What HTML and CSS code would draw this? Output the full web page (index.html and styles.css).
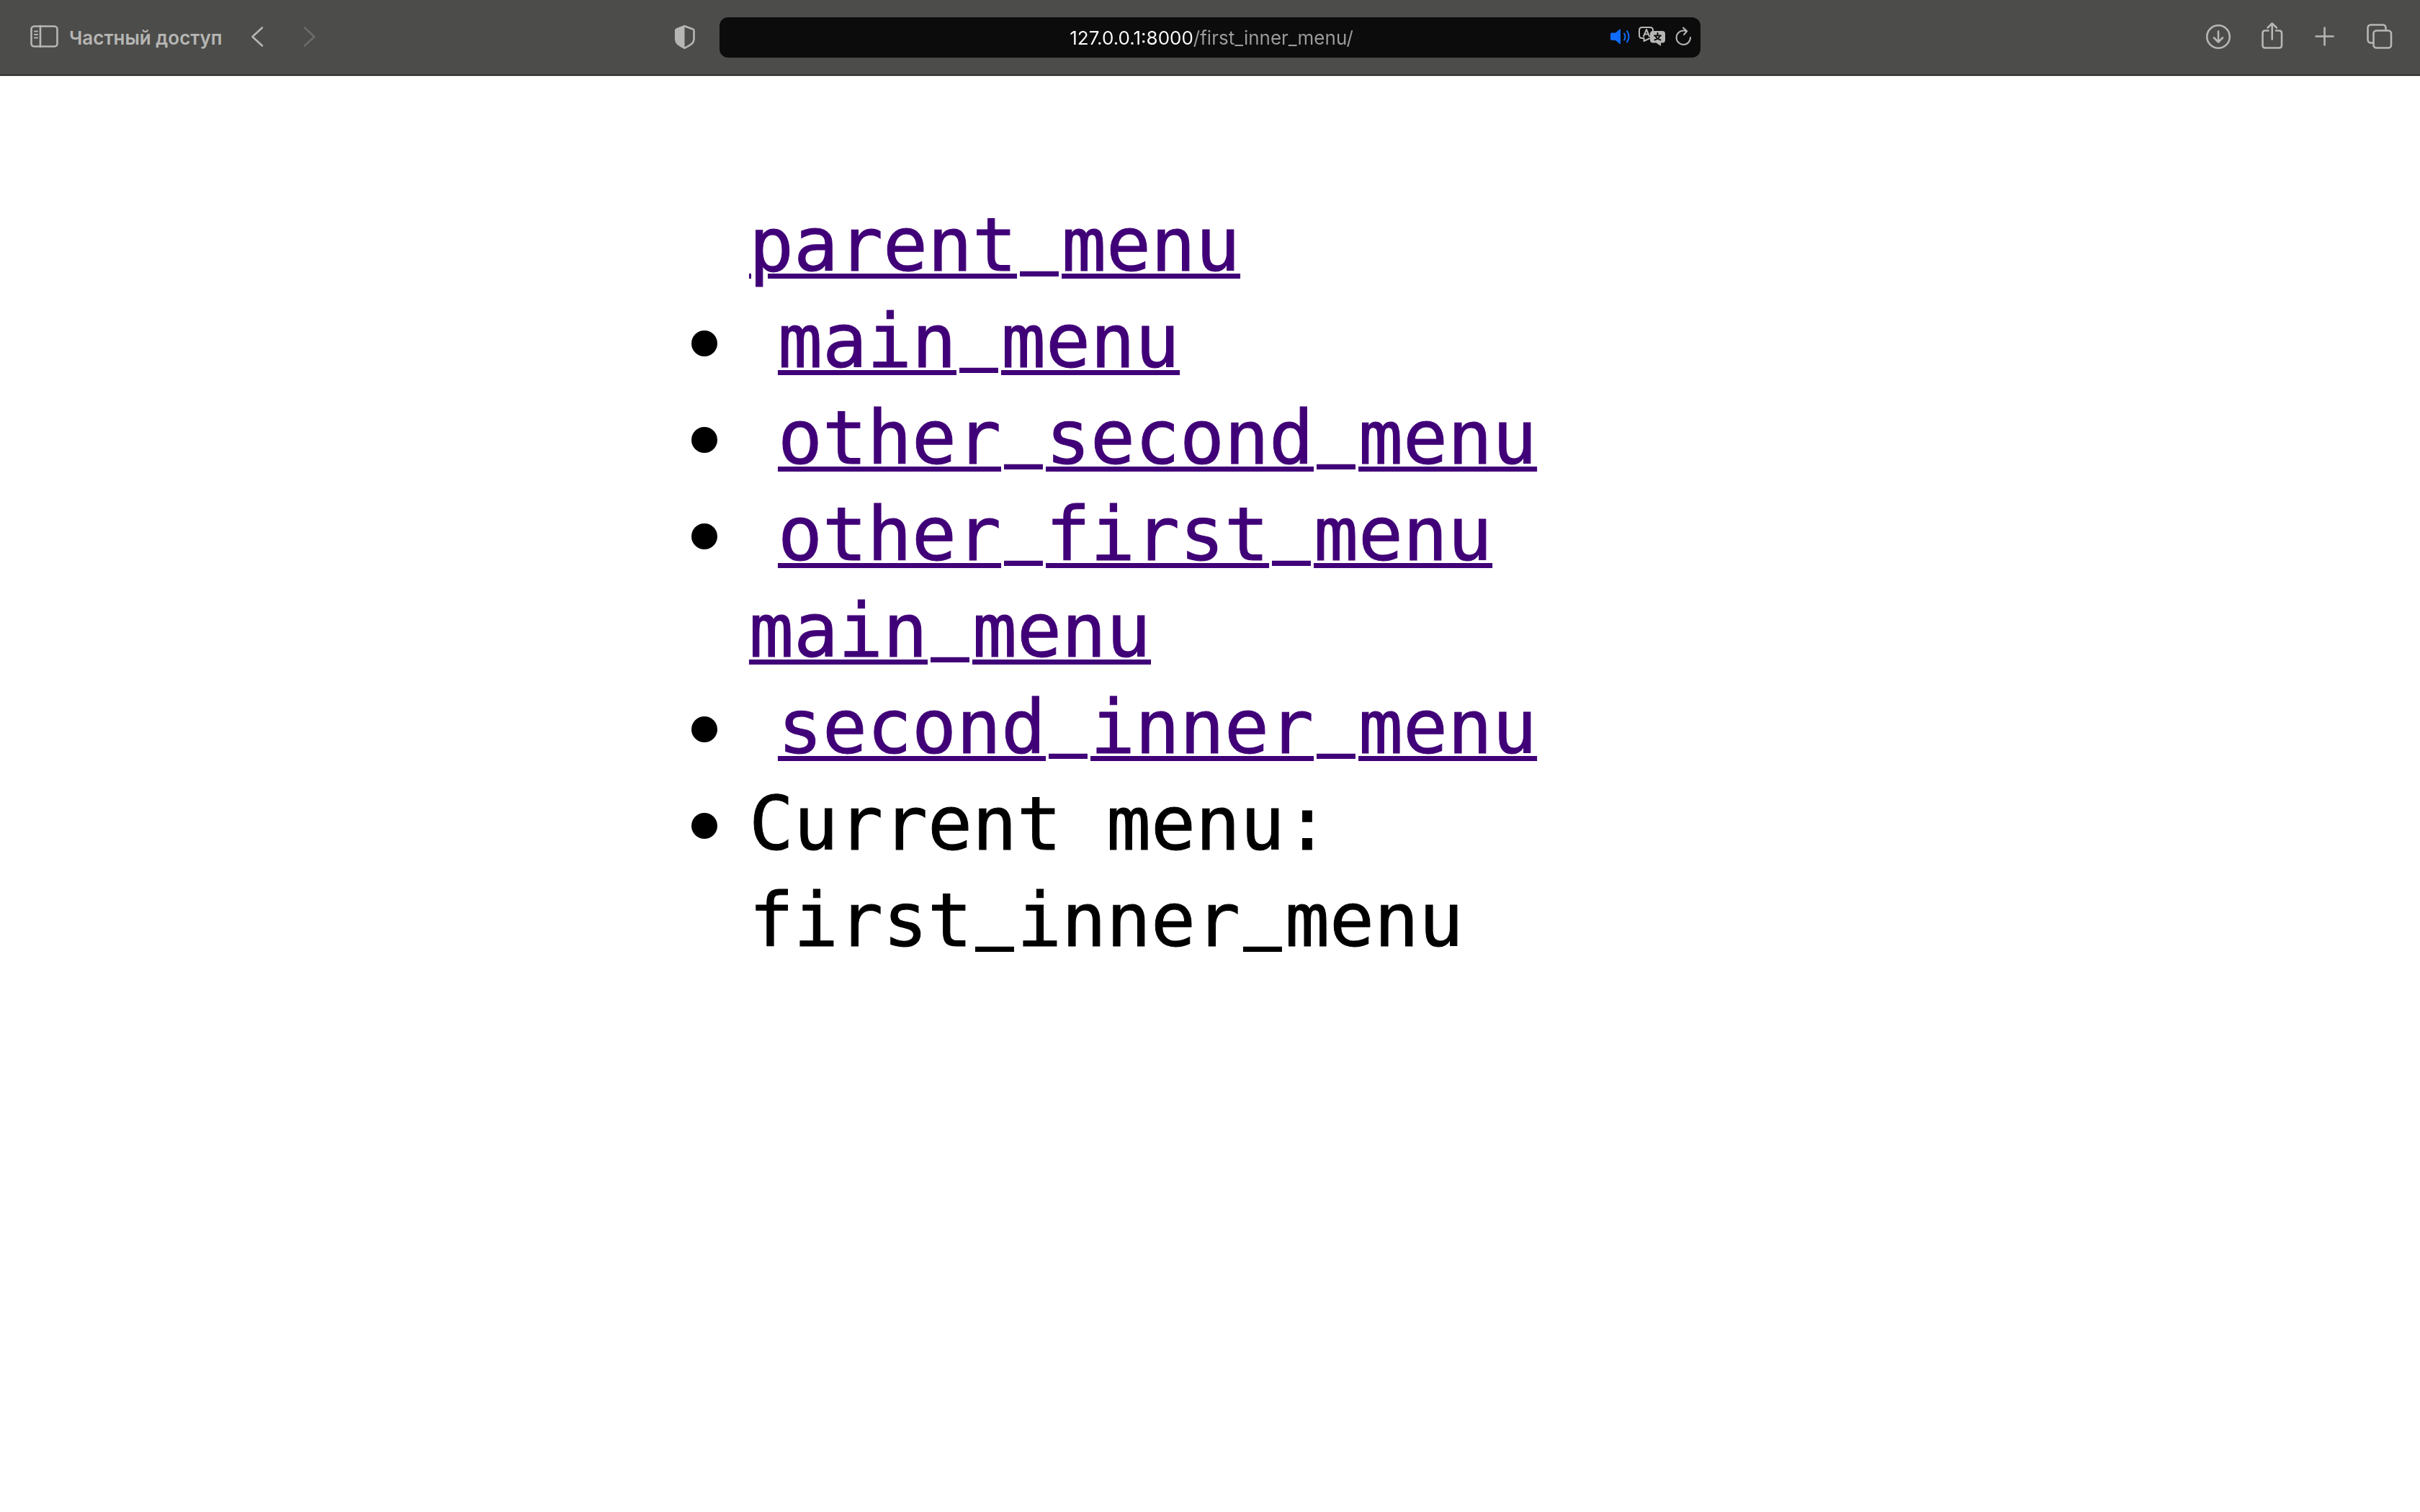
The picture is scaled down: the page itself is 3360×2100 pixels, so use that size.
FILE: index.html
```html
<!DOCTYPE html>
<html lang="ru">
<head>
<meta charset="utf-8">
<title>first_inner_menu</title>
<link rel="stylesheet" href="styles.css">
</head>
<body>
<header class="toolbar">
  <div class="tools tools-left">
    <button class="tool private" type="button">
      <svg width="42" height="44" viewBox="0 0 42 44" aria-hidden="true"><rect x="3.500" y="6.500" width="36" height="28" rx="4"/><path d="M16 6v29"/><path class="thin" d="M8 13.500h4M8 18h4M8 22.500h4"/></svg>
      <span>Частный доступ</span>
    </button>
    <button class="tool back" type="button" aria-label="Назад">
      <svg width="20" height="44" viewBox="0 0 20 44" aria-hidden="true"><path d="M17 8.500 3.500 21 17 33.500"/></svg>
    </button>
    <button class="tool forward" type="button" aria-label="Вперёд" disabled>
      <svg width="20" height="44" viewBox="0 0 20 44" aria-hidden="true"><path d="M4 8.500 17.500 21 4 33.500"/></svg>
    </button>
    <button class="tool shield" type="button" aria-label="Отчёт о конфиденциальности">
      <svg width="32" height="44" viewBox="0 0 32 44" aria-hidden="true"><path d="M15.500 6.200 27 10.500Q28.500 11 28.500 12.500V24Q28.500 28.500 24.500 31.500 20.500 34.500 15.500 36.700 10.500 34.500 6.800 31.500 3.200 28.500 3.200 24V12.500Q3.200 11 4.500 10.500Z"/><path class="solid" d="M15.500 6 4 10.500 3 12v13l3 5.500 9.500 6.500Z"/></svg>
    </button>
  </div>
  <div class="address">
    <input class="url" type="text" aria-label="Адрес" value="127.0.0.1:8000/first_inner_menu/">
    <div class="address-tools">
      <button class="tool sound" type="button" aria-label="Выключить звук">
        <svg width="28" height="44" viewBox="0 0 28 44" aria-hidden="true"><path class="solid" d="M3 15.500h5l6-5q1-.8 1 .5v19.500q0 1.300-1 .5l-6-5H3q-2 0-2-2v-6.500q0-2 2-2Z"/><path d="M20 16.500q3 4.500 0 9M24 13q5 8 0 15.500"/></svg>
      </button>
      <button class="tool translate" type="button" aria-label="Перевести">
        <svg width="40" height="44" viewBox="0 0 40 44" aria-hidden="true"><path d="M15 23.500 7.500 27v-4H5q-4 0-4-4v-7q0-4 4-4h11q4 0 4 4v1"/><path d="M7 20.500 11 11l4 9.500M8.500 17.500h5"/><path class="solid" d="M20 13h13q4 0 4 4v8.500q0 4-4 4h-2v4.500l-6.500-4.500H20q-4 0-4-4V17q0-4 4-4Z"/><path class="cut" d="M26.500 16v3M22 19.500h9M23.500 20q1.500 4 7 5.500M29.500 20q-1.500 4-7 5.500"/></svg>
      </button>
      <button class="tool reload" type="button" aria-label="Обновить">
        <svg width="24" height="44" viewBox="0 0 24 44" aria-hidden="true"><path d="M20 22A9.700 9.700 0 1 1 10.500 12.500q2.500 0 4.500.8M10 8.500l5.200 4.800L11 18"/></svg>
      </button>
    </div>
  </div>
  <div class="tools tools-right">
    <button class="tool" type="button" aria-label="Загрузки">
      <svg width="36" height="44" viewBox="0 0 36 44" aria-hidden="true"><circle cx="20" cy="21" r="15.800"/><path d="M20 13.500v15M14 22.500l6 6 6-6"/></svg>
    </button>
    <button class="tool" type="button" aria-label="Поделиться">
      <svg width="30" height="44" viewBox="0 0 30 44" aria-hidden="true"><path d="M9.500 12.500H5q-3.500 0-3.500 3.500v17q0 3.500 3.500 3.500h19.500q3.500 0 3.500-3.500V16q0-3.500-3.500-3.500H20M14.700 24.500V3M8.500 8.500l6.200-6 6.200 6"/></svg>
    </button>
    <button class="tool" type="button" aria-label="Новая вкладка">
      <svg width="28" height="44" viewBox="0 0 28 44" aria-hidden="true"><path d="M1.500 20.500h24M13.500 8.500v24"/></svg>
    </button>
    <button class="tool" type="button" aria-label="Обзор вкладок">
      <svg width="36" height="44" viewBox="0 0 36 44" aria-hidden="true"><rect x="9.500" y="12.500" width="24.500" height="24" rx="4"/><path d="M9 29.500H6q-4.500 0-4.500-4.500V9q0-4.500 4.500-4.500h16q4.500 0 4.500 4.500v3"/></svg>
    </button>
  </div>
</header>
<main class="page">
  <ul class="menu">
    <li class="plain"><a href="#parent_menu">parent<span class="low">_</span>menu</a></li>
    <li><a class="indented" href="#main_menu">main<span class="low">_</span>menu</a></li>
    <li><a class="indented" href="#other_second_menu">other<span class="low">_</span>second<span class="low">_</span>menu</a></li>
    <li><a class="indented" href="#other_first_menu">other<span class="low">_</span>first<span class="low">_</span>menu</a></li>
    <li class="plain"><a href="#main_menu">main<span class="low">_</span>menu</a></li>
    <li><a class="indented" href="#second_inner_menu">second<span class="low">_</span>inner<span class="low">_</span>menu</a></li>
    <li><span>Current menu: <span class="name">first<span class="low">_</span>inner<span class="low">_</span>menu</span></span></li>
  </ul>
</main>
</body>
</html>
```
FILE: styles.css
```css
* {
  box-sizing: border-box;
}

body {
  margin: 0;
  background: #fff;
  color: #000;
}

.toolbar {
  display: grid;
  grid-template-columns: 1fr 40.55% 1fr;
  align-items: center;
  padding: 24px 0;
  background: #4c4c4a;
  border-bottom: 1px solid #000;
  box-shadow: 0 1px 0 #b9b9b5;
  font-family: Inter, "Liberation Sans", sans-serif;
  font-size: 26px;
}

.tools {
  display: flex;
  align-items: center;
}

.tools-left {
  padding: 0 32px 0 40px;
}

.tools-right {
  justify-content: flex-end;
  gap: 44px;
  padding-right: 38px;
}

.tool {
  display: flex;
  align-items: center;
  gap: 14px;
  padding: 0;
  border: 0;
  background: none;
  color: #b6b6b4;
  font: inherit;
}

.tool svg {
  display: block;
  overflow: visible;
  fill: none;
  stroke: currentColor;
  stroke-width: 2.6;
  stroke-linecap: round;
  stroke-linejoin: round;
}

.tool .thin {
  stroke-width: 2;
}

.tool .solid {
  fill: currentColor;
  stroke: none;
}

.private {
  font-weight: 600;
}

.back {
  margin-left: 38px;
}

.forward {
  margin-left: 52px;
  color: #6b6b69;
}

.shield {
  margin-left: auto;
}

.address {
  display: grid;
  align-items: center;
  height: 56px;
  border-radius: 12px;
  background: #0c0c0c;
}

.url,
.address-tools {
  grid-area: 1 / 1;
}

/* The host is white and the path grey, split at the slash. */
.url {
  width: 100%;
  height: 56px;
  padding: 0 0 0 4px;
  border: 0;
  color: #fff;
  background: linear-gradient(90deg, #fff calc(50% - 23px), #9c9c9c calc(50% - 23px));
  background-clip: text;
  -webkit-background-clip: text;
  -webkit-text-fill-color: transparent;
  font: inherit;
  text-align: center;
}

.address-tools {
  display: flex;
  justify-self: end;
  gap: 12px;
  padding-right: 10px;
}

.sound {
  color: #0f6cff;
}

.translate .cut {
  stroke: #0c0c0c;
  stroke-width: 2;
}

.sound svg,
.translate svg,
.reload svg {
  stroke-width: 2;
}

.page {
  width: 42.86%;
  margin: 0 auto;
  padding: 168px 0;
}

.menu {
  margin: 0;
  padding: 0;
  list-style: none;
  font-family: "DejaVu Sans Mono", monospace;
  font-size: 103px;
  line-height: 134px;
  -webkit-text-stroke-width: 1px;
}

.menu li {
  display: flex;
  gap: 44px;
}

.menu li::before {
  content: "";
  flex: none;
  width: 36px;
  height: 36px;
  margin-top: 52px;
  border-radius: 50%;
  background: #000;
}

.menu .plain::before {
  visibility: hidden;
}

.menu a {
  color: #400077;
  text-decoration-thickness: 7px;
  text-underline-offset: 4px;
}

.menu .indented {
  margin-left: 40px;
}

.menu .name {
  white-space: nowrap;
}

/* Raised, heavier underscore that interrupts the link underline. */
.menu .low {
  display: inline-block;
  padding: 0 6px;
  font-size: 83px;
  line-height: 1;
  vertical-align: 14px;
  -webkit-text-stroke-width: 4px;
}
```
